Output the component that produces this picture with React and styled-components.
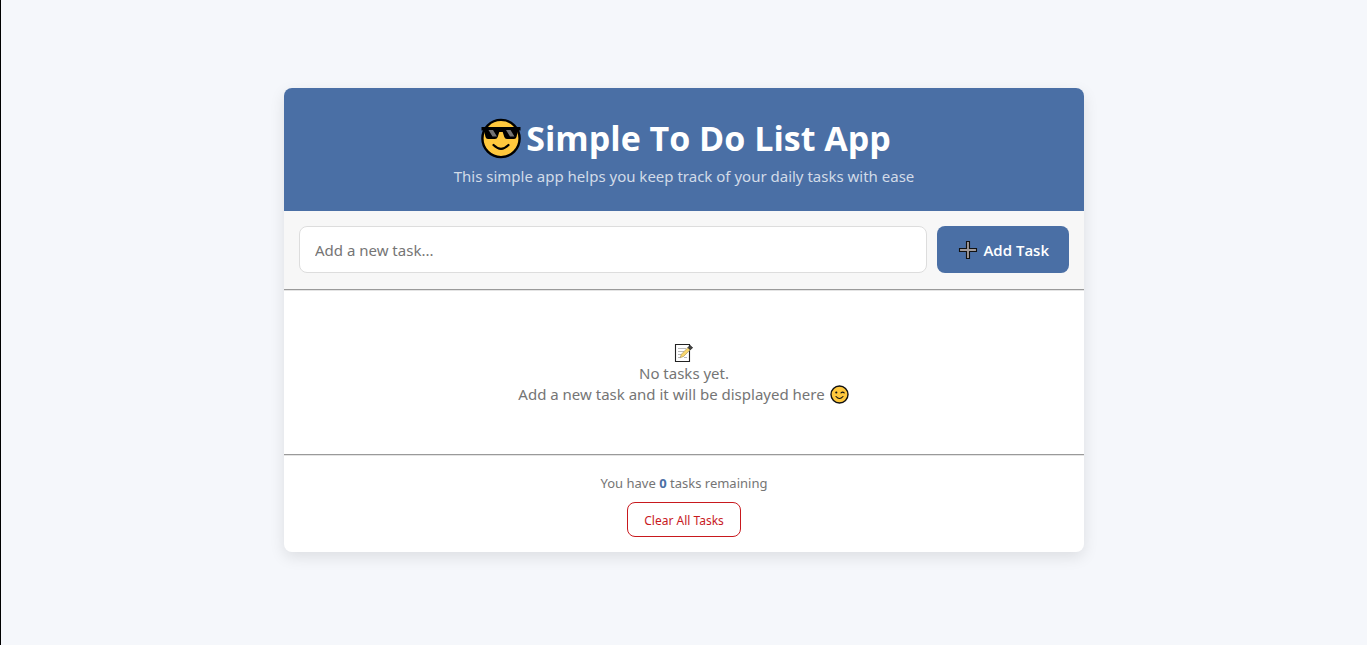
import React, { useState } from "react";
import styled, { createGlobalStyle } from "styled-components";

const GlobalStyle = createGlobalStyle`
  * { box-sizing: border-box; margin: 0; padding: 0; }
  body {
    background: #f5f7fb;
    font-family: "Noto Sans", "Open Sans", sans-serif;
    color: #757575;
  }
  button, input { font-family: inherit; }
`;

const Page = styled.main`
  min-height: 100vh;
  display: flex;
  align-items: center;
  justify-content: center;
  padding: 16px 16px 21px;
  border-left: 1px solid #000;
`;

const Card = styled.section`
  width: 100%;
  max-width: 800px;
  background: #fff;
  border-radius: 8px;
  overflow: hidden;
  box-shadow: 0 5px 15px rgba(0, 0, 0, 0.1);
`;

const Header = styled.header`
  background: #4a6fa5;
  color: #fff;
  text-align: center;
  padding: 26px 24px 22px;
`;

const Title = styled.h1`
  display: flex;
  align-items: center;
  justify-content: center;
  gap: 4px;
  padding-left: 3px;
  font-family: "Open Sans", sans-serif;
  font-size: 34px;
  line-height: 48px;
  font-weight: 700;
`;

const Subtitle = styled.p`
  margin-top: 2px;
  font-size: 15px;
  line-height: 25px;
  color: #d2dbe8;
`;

const TaskForm = styled.form`
  display: flex;
  gap: 10px;
  padding: 15px 15px 16px;
  background: #f7f7f7;
`;

const TaskInput = styled.input`
  flex: 1;
  min-width: 0;
  height: 47px;
  padding: 0 15px;
  border: 1px solid #ddd;
  border-radius: 8px;
  background: #fff;
  color: #333;
  font-size: 15px;
  &::placeholder { color: #757575; opacity: 1; }
`;

const AddButton = styled.button`
  display: flex;
  align-items: center;
  gap: 4px;
  height: 47px;
  padding: 0 20px;
  border: 0;
  border-radius: 8px;
  background: #4a6fa5;
  color: #fff;
  font-family: "Open Sans", sans-serif;
  font-size: 15px;
  font-weight: 600;
  white-space: nowrap;
  cursor: pointer;
`;

const Divider = styled.hr`
  border-style: solid;
  border-color: #9a9a9a transparent #e4e4e4;
  border-width: 1px 0;
`;

const EmptyState = styled.div`
  display: flex;
  flex-direction: column;
  align-items: center;
  padding: 51px 16px 49px;
  font-size: 15px;
  line-height: 21px;
  text-align: center;
`;

const Line = styled.p`
  display: flex;
  align-items: center;
  gap: 4px;
  min-height: 21px;
`;

const Footer = styled.footer`
  display: flex;
  flex-direction: column;
  align-items: center;
  gap: 8px;
  padding: 16px 16px 15px;
`;

const Remaining = styled.p`
  font-size: 13px;
  line-height: 22px;
  strong { color: #4a6fa5; font-weight: 700; }
`;

const ClearButton = styled.button`
  height: 35px;
  padding: 1px 16px 0;
  border: 1px solid #c8191e;
  border-radius: 8px;
  background: #fff;
  color: #c8191e;
  font-size: 12px;
  cursor: pointer;
`;

const Icon = styled.svg`
  display: block;
  flex: none;
`;

function CoolFace() {
  return (
    <Icon width="42" height="42" viewBox="0 0 42 42" aria-hidden="true">
      <circle cx="21" cy="21.5" r="18.6" fill="#ffc83d" stroke="#000" strokeWidth="2.4" />
      <path d="M1.5 10H40.5V13.5H38L36.5 20Q36 22 34 22H27Q25 22 24.3 20L22.7 15H19.3L17.7 20Q17 22 15 22H8Q6 22 5.5 20L4 13.5H1.5Z" fill="#000" />
      <path d="M8.5 13h4.5l4 6.5h-4.5ZM26 13h4.5l4 6.5H30Z" fill="#727272" />
      <path d="M13.5 28Q21 35.5 28.5 28" fill="none" stroke="#000" strokeWidth="2.2" strokeLinecap="round" />
    </Icon>
  );
}

function Plus() {
  return (
    <Icon width="22" height="22" viewBox="0 0 22 22" aria-hidden="true">
      <path d="M9.5 2.5h3v7h7v3h-7v7h-3v-7h-7v-3h7z" fill="#a09a9a" stroke="#111" strokeWidth="1.1" />
    </Icon>
  );
}

function Memo() {
  return (
    <Icon width="20" height="20" viewBox="0 0 20 20" aria-hidden="true">
      <path d="M1.5 1.5h14v17h-14z" fill="#fff" stroke="#222" strokeWidth="1.1" />
      <path d="M4 5.5h8M4 8.5h6M4 11.5h3M10 14.5h3M4 14.5h2" stroke="#bbb" />
      <path d="M6 14.8l1.4-3.6L14 4.5l2.3 2.3L9.6 13.4z" fill="#f8d66d" stroke="#8a7a4a" strokeWidth=".5" />
      <path d="M14 4.5l2-2 2.6 2.2-2.3 2.1z" fill="#444" stroke="#222" strokeWidth=".8" />
    </Icon>
  );
}

function Wink() {
  return (
    <Icon width="21" height="21" viewBox="0 0 21 21" aria-hidden="true">
      <circle cx="10.5" cy="10.5" r="8.5" fill="#ffc83d" stroke="#111" strokeWidth="1.4" />
      <circle cx="7.3" cy="8.5" r="1.1" fill="#111" />
      <path d="M12 8.8q1.7-1.5 3.2 0M7 12.5q3.5 4 7 0" fill="none" stroke="#111" strokeWidth="1.1" strokeLinecap="round" />
    </Icon>
  );
}

export default function App() {
  const [task, setTask] = useState("");
  return (
    <>
      <GlobalStyle />
      <Page>
        <Card>
          <Header>
            <Title><CoolFace />Simple To Do List App</Title>
            <Subtitle>This simple app helps you keep track of your daily tasks with ease</Subtitle>
          </Header>
          <TaskForm onSubmit={(e) => e.preventDefault()}>
            <TaskInput
              type="text"
              aria-label="New task"
              placeholder="Add a new task..."
              value={task}
              onChange={(e) => setTask(e.target.value)}
            />
            <AddButton type="submit"><Plus />Add Task</AddButton>
          </TaskForm>
          <Divider />
          <EmptyState>
            <Line><Memo /></Line>
            <Line>No tasks yet.</Line>
            <Line>Add a new task and it will be displayed here <Wink /></Line>
          </EmptyState>
          <Divider />
          <Footer>
            <Remaining>You have <strong>0</strong> tasks remaining</Remaining>
            <ClearButton type="button">Clear All Tasks</ClearButton>
          </Footer>
        </Card>
      </Page>
    </>
  );
}
